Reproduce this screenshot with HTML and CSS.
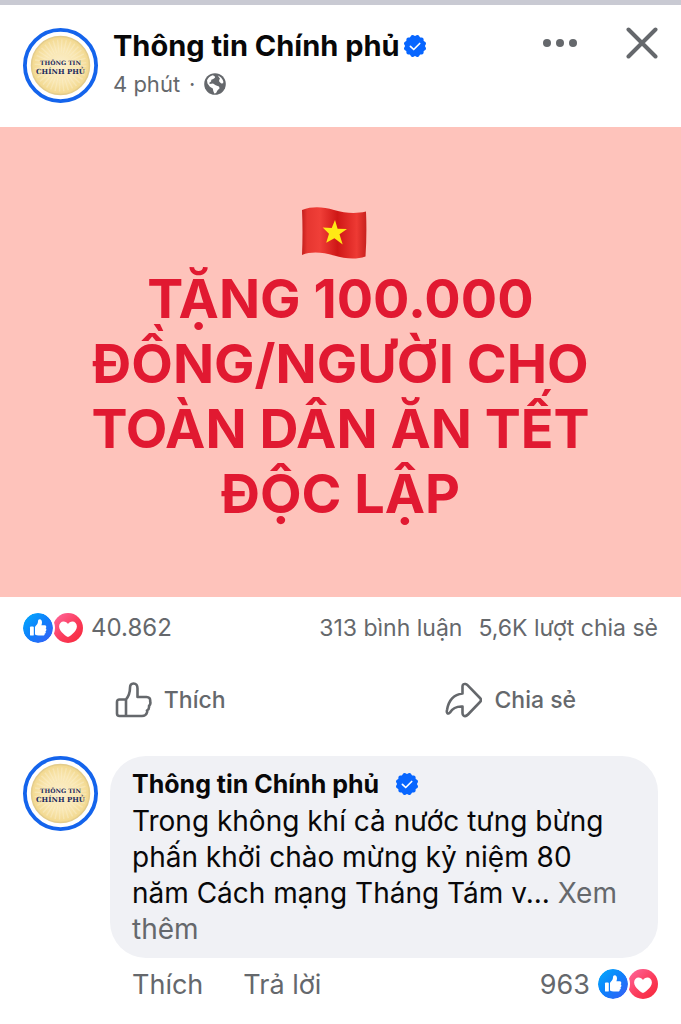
FILE: index.html
```
<!DOCTYPE html>
<html lang="vi">
<head>
    <meta charset="UTF-8">
    <meta name="viewport" content="width=device-width, initial-scale=1">
    <title>Thông tin Chính phủ</title>
    <link rel="stylesheet" href="styles.css">
</head>
<body>
    <!-- shared icons -->
    <svg class="defs" aria-hidden="true">
        <defs>
            <linearGradient id="blue" x1="0" y1="0" x2="1" y2="1">
                <stop offset="0" stop-color="#02adfc"/>
                <stop offset="0.5" stop-color="#0f7ffb"/>
                <stop offset="1" stop-color="#3b5cf5"/>
            </linearGradient>
            <linearGradient id="pink" x1="0" y1="0" x2="1" y2="1">
                <stop offset="0" stop-color="#ff6aa0"/>
                <stop offset="0.55" stop-color="#fb3c5c"/>
                <stop offset="1" stop-color="#f62638"/>
            </linearGradient>
            <radialGradient id="gold">
                <stop offset="0" stop-color="#fbeecb"/>
                <stop offset="0.6" stop-color="#f9e6b0"/>
                <stop offset="1" stop-color="#f2d88e"/>
            </radialGradient>
            <linearGradient id="cloth" x1="0" y1="0" x2="1" y2="0">
                <stop offset="0" stop-color="#c41f1c"/>
                <stop offset="0.08" stop-color="#e63630"/>
                <stop offset="0.28" stop-color="#f03f38"/>
                <stop offset="0.55" stop-color="#cf1716"/>
                <stop offset="0.85" stop-color="#ee3a34"/>
                <stop offset="1" stop-color="#c8211d"/>
            </linearGradient>
        </defs>
        <symbol id="seal" viewBox="0 0 75 75">
            <circle cx="37.5" cy="37.5" r="35.6" fill="#fff" stroke="#1464ec" stroke-width="3.8"/>
            <circle cx="37.5" cy="37.5" r="29" fill="url(#gold)" stroke="#e3cc8c" stroke-width="1.5"/>
            <circle cx="37.5" cy="37.5" r="19.5" fill="none" stroke="#fdf4da" stroke-width="13" stroke-dasharray="1.2 2.2" opacity="0.35"/>
        </symbol>
        <symbol id="verified" viewBox="0 0 24 24">
            <g fill="#0866ff">
                <rect x="3.4" y="3.4" width="17.2" height="17.2" rx="2"/>
                <rect x="3.4" y="3.4" width="17.2" height="17.2" rx="2" transform="rotate(30 12 12)"/>
                <rect x="3.4" y="3.4" width="17.2" height="17.2" rx="2" transform="rotate(60 12 12)"/>
            </g>
            <path d="M7.4 12.3l3.3 3.2 6-6" fill="none" stroke="#fff" stroke-width="1.7" stroke-linecap="round" stroke-linejoin="round"/>
        </symbol>
        <symbol id="like" viewBox="0 0 30 30">
            <circle cx="15" cy="15" r="15" fill="url(#blue)"/>
            <rect x="7" y="13.6" width="3.8" height="9" rx="0.9" fill="#fff"/>
            <path d="M12 14.5c0-.8.3-1.200.8-1.800 1.400-1.400 2.200-2.500 2.200-4.400 0-1.300.7-2 1.700-2 1.600 0 2.300 1.600 2.300 3.200 0 1-.3 2-.6 2.800h3.100c1.100 0 1.800.7 1.800 1.600 0 .6-.3 1.100-.7 1.400.5.3.8.8.8 1.400 0 .7-.4 1.200-1 1.500.3.3.4.6.4 1 0 .7-.5 1.300-1.200 1.500.1.200.1.400.1.600 0 .9-.7 1.300-1.700 1.300h-4.400c-1.400 0-2.600-.4-3.600-1z" fill="#fff"/>
        </symbol>
        <symbol id="love" viewBox="0 0 30 30">
            <circle cx="15" cy="15" r="15" fill="url(#pink)"/>
            <path d="M15 24c-.5 0-8.900-5.200-8.900-10.600 0-3 2-5 4.500-5 1.900 0 3.500 1 4.400 2.600.9-1.600 2.500-2.600 4.400-2.600 2.500 0 4.500 2 4.500 5 0 5.400-8.400 10.600-8.900 10.600z" fill="#fff"/>
        </symbol>
    </svg>

    <article class="post">
        <header class="post-header">
            <div class="avatar">
                <svg width="75" height="75"><use href="#seal"/></svg>
                <div class="seal-text">THÔNG TIN<br><span class="seal-name">CHÍNH PHỦ</span></div>
            </div>
            <div class="post-info">
                <h1 class="post-author">Thông tin Chính phủ <svg class="badge"><use href="#verified"/></svg></h1>
                <div class="post-meta">
                    <span>4 phút</span>
                    <span>·</span>
                    <svg class="globe" viewBox="0 0 22 22">
                        <circle cx="11" cy="11" r="10.800" fill="#65686c"/>
                        <path d="M3 7.200C4.200 4.800 6.200 3 8.800 2.300l1.900.9.300 1.500-1.800 1.400-1.900.6-.2 1.800-1.800 1.200.4 1.300 3.300-.4 2.700 1.700 3.300 1.300.6 1.700-2.200 2.200-1.300 2.400-1.800.5-1-2.400-.5-2.600-2.900-1.700-2.400-3.300z" fill="#fff"/>
                        <path d="M13.800 2.400c2.600 1 4.700 3.200 5.500 5.900l-.1 1.900-1.900.4-2-1.800-.2-1.900.9-1.200z" fill="#fff"/>
                    </svg>
                </div>
            </div>
            <button class="icon-button" aria-label="Tùy chọn">
                <svg width="36" height="36" viewBox="0 0 36 36" fill="#65686c">
                    <circle cx="5" cy="18" r="4"/><circle cx="18" cy="18" r="4"/><circle cx="31" cy="18" r="4"/>
                </svg>
            </button>
            <button class="icon-button" aria-label="Đóng">
                <svg width="32" height="32" viewBox="0 0 32 32" fill="none" stroke="#65686c" stroke-width="4" stroke-linecap="round">
                    <path d="M2.500 2.500l27 27M29.500 2.500l-27 27"/>
                </svg>
            </button>
        </header>

        <div class="poster">
            <svg class="flag" viewBox="0 0 80 52" role="img" aria-label="Việt Nam">
                <path d="M1 3C12-1 22 0 33 3s21 4 32 1.500Q66 27 64.500 49.500C54 53 44 51.500 33 48.500S11 44 1 48Q2 25 1 3z" fill="url(#cloth)"/>
                <path d="M34 13l2.600 8.700 9.400.3-7.500 5.300 3.200 10.200-8.300-6.300-8.200 4.500 2.800-9-6.300-6.300 9 .5z" fill="#ffe915"/>
            </svg>
            <p class="poster-text">TẶNG 100.000<br>ĐỒNG/NGƯỜI CHO<br>TOÀN DÂN ĂN TẾT<br>ĐỘC LẬP</p>
        </div>

        <div class="stats">
            <span class="reactions">
                <svg class="reaction front"><use href="#like"/></svg>
                <svg class="reaction"><use href="#love"/></svg>
            </span>
            <span class="stats-total">40.862</span>
            <a class="stats-link" href="#comments">313 bình luận</a>
            <a class="stats-link" href="#shares">5,6K lượt chia sẻ</a>
        </div>

        <div class="actions">
            <button class="action">
                <svg width="37" height="36" viewBox="0 0 37 36" fill="none" stroke="#65686c" stroke-width="2.600" stroke-linejoin="round" stroke-linecap="round">
                    <path d="M11 17.500H4.500Q2 17.500 2 20v11.500Q2 34 4.500 34H27q4 0 5-3.500.4-1.500 0-2 2.500-1.500 2-4.500 2-2 1.200-4.500.4-4.500-3.700-4.500H22.500V6.500q0-5-4-5-3.500 0-3.500 4.500 0 6.500-4 11.500zV34"/>
                </svg>
                Thích
            </button>
            <button class="action">
                <svg width="37" height="36" viewBox="0 0 37 36" fill="none" stroke="#65686c" stroke-width="2.600" stroke-linejoin="round">
                    <path d="M17.500 11.500V4.500q0-3 3-2.500 1 .2 2 1.200L35 16q2 2 0 4L23 32.500q-2.500 2.500-4.500 1-1-.8-1-2.500V24.500Q9 24 5 30.500q-1.500 1.800-2.700.5-.8-1-.3-3Q4.500 13 17.500 11.500z"/>
                </svg>
                Chia sẻ
            </button>
        </div>

        <section class="comment" id="comments">
            <div class="avatar">
                <svg width="75" height="75"><use href="#seal"/></svg>
                <div class="seal-text">THÔNG TIN<br><span class="seal-name">CHÍNH PHỦ</span></div>
            </div>
            <div class="comment-main">
                <div class="bubble">
                    <h2 class="comment-author">Thông tin Chính phủ <svg class="badge"><use href="#verified"/></svg></h2>
                    <p class="comment-text">Trong không khí cả nước tưng bừng<br>phấn khởi chào mừng kỷ niệm 80<br>năm Cách mạng Tháng Tám v... <a class="more" href="#more">Xem<br>thêm</a></p>
                </div>
                <div class="comment-footer">
                    <button class="text-button">Thích</button>
                    <button class="text-button">Trả lời</button>
                    <span class="comment-total">963</span>
                    <span class="reactions">
                        <svg class="reaction front"><use href="#like"/></svg>
                        <svg class="reaction"><use href="#love"/></svg>
                    </span>
                </div>
            </div>
        </section>
    </article>
</body>
</html>
```
FILE: styles.css
```
* {
    box-sizing: border-box;
}

body {
    margin: 0;
    background: #fff;
    color: #080809;
    font-family: Inter, "Open Sans", sans-serif;
    font-size: 23px;
}

h1, h2, p {
    margin: 0;
}

svg {
    display: block;
    flex-shrink: 0;
}

button {
    padding: 0;
    border: 0;
    background: none;
    color: inherit;
    font: inherit;
    cursor: pointer;
}

a {
    color: inherit;
    text-decoration: none;
}

.defs {
    position: absolute;
    width: 0;
    height: 0;
}

.post {
    border-top: 5px solid #c9cad3;
}

/* header */
.post-header {
    display: flex;
    align-items: flex-start;
    padding: 23px;
}

.avatar {
    position: relative;
    flex-shrink: 0;
    width: 75px;
    height: 75px;
    margin-right: 15px;
}

/* lettering over the gold seal */
.seal-text {
    position: absolute;
    inset: 30px 0 auto;
    color: #1c2a5e;
    font-family: "DejaVu Serif", serif;
    font-size: 6px;
    font-weight: bold;
    line-height: 9px;
    text-align: center;
    white-space: nowrap;
}

.seal-name {
    font-size: 7px;
}

.post-info {
    flex: 1;
}

.post-author, .comment-author {
    display: flex;
    align-items: center;
    gap: 3px;
    font-size: 29px;
    line-height: 36px;
    white-space: nowrap;
}

.badge {
    width: 24px;
    height: 24px;
}

.post-meta {
    display: flex;
    align-items: center;
    gap: 9px;
    color: #65686c;
    font-size: 22px;
    line-height: 40px;
}

.globe {
    width: 22px;
    height: 22px;
}

.icon-button {
    display: flex;
    align-items: center;
    height: 30px;
    margin-left: 48px;
}

/* coloured text post */
.poster {
    padding: 75px 24px 71px;
    background: #fec3bb;
    text-align: center;
}

.flag {
    width: 80px;
    height: 52px;
    margin: 5px auto 7px;
}

.poster-text {
    color: #e11931;
    font-size: 54px;
    font-weight: bold;
    line-height: 65px;
}

/* reactions and counters */
.stats {
    display: flex;
    align-items: center;
    padding: 14px 23px;
    color: #65686c;
    line-height: 34px;
}

.reactions {
    display: flex;
}

.reaction {
    width: 30px;
    height: 30px;
}

.front {
    position: relative;
    border-radius: 50%;
    box-shadow: 0 0 0 2px #fff;
}

.stats-total {
    margin: 0 auto 0 8px;
    font-size: 24px;
}

.stats-link {
    margin-left: 16px;
}

.actions {
    display: grid;
    grid-template-columns: 1fr 1fr;
    padding: 6px 0 21px;
    color: #65686c;
    font-weight: 500;
}

.action {
    display: flex;
    align-items: center;
    justify-content: center;
    gap: 12px;
    height: 70px;
}

/* comment */
.comment {
    display: flex;
    padding: 0 23px;
}

.comment .avatar {
    margin-right: 12px;
}

.comment-main {
    flex: 1;
}

.bubble {
    padding: 10px 22px 11px;
    border-radius: 36px;
    background: #f0f1f5;
}

.comment-author {
    gap: 16px;
    margin-bottom: 1px;
    font-size: 25px;
}

.comment-text {
    font-size: 28px;
    line-height: 36px;
    white-space: nowrap;
}

.more, .comment-footer {
    color: #65686c;
}

.comment-footer {
    display: flex;
    align-items: center;
    padding-left: 22px;
    height: 52px;
    font-size: 27px;
}

.text-button {
    margin-right: 40px;
}

.comment-total {
    margin: 0 8px 0 auto;
}
```
